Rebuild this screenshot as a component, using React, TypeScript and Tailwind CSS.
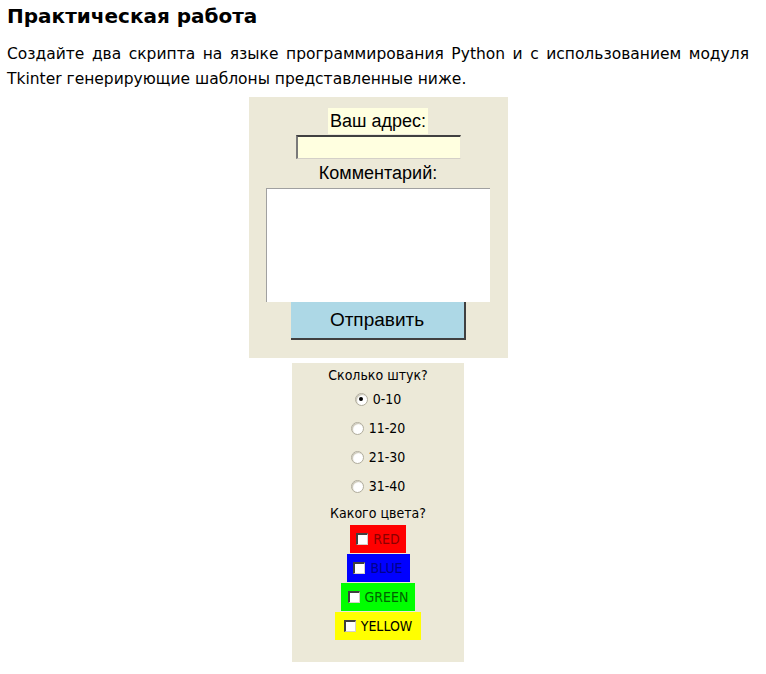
import React from "react";

const colors = [
  { name: "RED", box: "bg-[#ff0000] w-[56px]", text: "text-[#8b0000]" },
  { name: "BLUE", box: "bg-[#0000ff] w-[63px]", text: "text-[#00008b]" },
  { name: "GREEN", box: "bg-[#00ff00] w-[74px]", text: "text-[#006400]" },
  { name: "YELLOW", box: "bg-[#ffff00] w-[86px]", text: "text-black" },
];

const ranges = ["0-10", "11-20", "21-30", "31-40"];

function Radio({ checked }: { checked?: boolean }) {
  return (
    <span className="relative inline-block h-[13px] w-[13px] rounded-full border border-[#b0ac9c] bg-white shadow-[inset_1px_1px_1px_#c9c5b4]">
      {checked && (
        <span className="absolute left-[3.5px] top-[3.5px] h-[4px] w-[4px] rounded-full bg-black" />
      )}
    </span>
  );
}

function Check() {
  return (
    <span className="inline-block h-[12px] w-[12px] border-l-2 border-t-2 border-l-[#404040] border-t-[#404040] border-r border-b border-r-[#d4d0c8] border-b-[#d4d0c8] bg-white" />
  );
}

export default function App() {
  return (
    <div className="min-h-[674px] bg-white font-['DejaVu_Sans',Verdana,sans-serif] text-black">
      <div className="w-[756px] px-[7px] pt-[3px]">
        <h2 className="text-[20px] font-bold leading-[26px]">Практическая работа</h2>
        <p className="mt-[13px] text-justify text-[15.5px] leading-[25px]">
          Создайте два скрипта на языке программирования Python и с использованием модуля
          Tkinter генерирующие шаблоны представленные ниже.
        </p>

        <div className="mt-[5px] flex flex-col items-center font-['Liberation_Sans',Arial,sans-serif]">
          <div className="flex h-[261px] w-[259px] flex-col items-center bg-[#ece9d8] pt-[11px]">
            <div className="bg-[#ffffe0] px-[2px] text-[18px] leading-[26px]">Ваш адрес:</div>
            <div className="mt-[1px] h-[24px] w-[165px] border-l-2 border-t-2 border-l-[#7a7a7a] border-t-[#404040] border-r border-b border-r-[#ece9d8] border-b-[#d4d0c8] bg-[#ffffe0]" />
            <div className="mt-[1px] text-[18px] leading-[26px]">Комментарий:</div>
            <div className="mt-[2px] h-[114px] w-[224px] border-l border-t border-[#a0a0a0] bg-white" />
            <div className="flex h-[38px] w-[175px] items-center justify-center border-r-2 border-b-2 border-r-[#404040] border-b-[#404040] bg-[#add8e6] text-[19px]">
              Отправить
            </div>
          </div>

          <div className="mt-[5px] flex h-[299px] w-[172px] flex-col items-center bg-[#ece9d8] pt-[3px] font-['DejaVu_Sans_Condensed','DejaVu_Sans',sans-serif] text-[14px]">
            <div className="leading-[18px]">Сколько штук?</div>
            <div className="mt-[6px] flex flex-col gap-[11px]">
              {ranges.map((r, i) => (
                <div key={r} className="flex h-[18px] items-center gap-[5px]" style={{ marginLeft: i === 0 ? 4 : 0 }}>
                  <Radio checked={i === 0} />
                  <span className="leading-[18px]">{r}</span>
                </div>
              ))}
            </div>
            <div className="mt-[9px] leading-[18px]">Какого цвета?</div>
            <div className="mt-[3px] flex flex-col items-center gap-[1px]">
              {colors.map((c) => (
                <div key={c.name} className={`flex h-[28px] items-center justify-center gap-[5px] ${c.box}`}>
                  <Check />
                  <span className={`leading-[18px] ${c.text}`}>{c.name}</span>
                </div>
              ))}
            </div>
          </div>
        </div>
      </div>
    </div>
  );
}
